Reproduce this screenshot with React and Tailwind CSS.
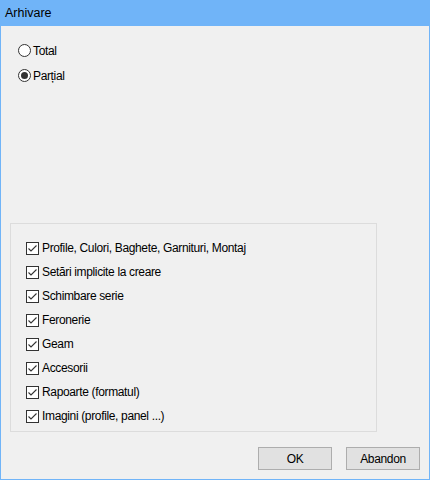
import { useState } from "react";

const ITEMS = [
  "Profile, Culori, Baghete, Garnituri, Montaj",
  "Setări implicite la creare",
  "Schimbare serie",
  "Feronerie",
  "Geam",
  "Accesorii",
  "Rapoarte (formatul)",
  "Imagini (profile, panel ...)",
];

function Radio({ label, checked, onClick }) {
  return (
    <div className="flex items-center h-[25px] cursor-default" onClick={onClick}>
      <span className="w-[13px] h-[13px] rounded-full border border-[#333] bg-white flex items-center justify-center">
        {checked && <span className="w-[7px] h-[7px] rounded-full bg-[#333]" />}
      </span>
      <span className="ml-[2px] leading-none">{label}</span>
    </div>
  );
}

function Check({ label, checked, onClick }) {
  return (
    <div className="flex items-center h-[24px] cursor-default" onClick={onClick}>
      <span className="w-[13px] h-[13px] border border-[#333] bg-white flex items-center justify-center">
        {checked && (
          <svg width="11" height="11" viewBox="0 0 11 11" fill="none">
            <path d="M1.5 5.5 L4 8 L9.5 2.5" stroke="#333" strokeWidth="1.1" />
          </svg>
        )}
      </span>
      <span className="ml-[3px] leading-none">{label}</span>
    </div>
  );
}

export default function App() {
  const [mode, setMode] = useState("partial");
  const [checks, setChecks] = useState(ITEMS.map(() => true));

  return (
    <div className="w-[430px] h-[480px] flex flex-col bg-[#f0f0f0] text-[12px] tracking-[-0.35px] text-black font-['Liberation_Sans',Arial,sans-serif]">
      {/* Title bar */}
      <div className="h-[26px] bg-[#70b4f8] flex items-center pl-[5px] text-[12.5px] tracking-normal shrink-0">
        Arhivare
      </div>

      {/* Body */}
      <div className="flex-1 flex flex-col border-x border-b border-[#70b4f8]">
        <div className="pl-[17px] pt-[12px]">
          <Radio label="Total" checked={mode === "total"} onClick={() => setMode("total")} />
          <Radio label="Parțial" checked={mode === "partial"} onClick={() => setMode("partial")} />
        </div>

        <div className="ml-[9px] mt-[135px] w-[367px] h-[209px] border border-[#dcdcdc] pl-[15px] pt-[12px]">
          {ITEMS.map((it, i) => (
            <Check
              key={it}
              label={it}
              checked={checks[i]}
              onClick={() => setChecks(c => c.map((v, j) => (j === i ? !v : v)))}
            />
          ))}
        </div>

        <div className="flex justify-end gap-[14px] pr-[9px] mt-[15px]">
          <button className="w-[74px] h-[23px] bg-[#e1e1e1] border border-[#adadad] text-[12px]">OK</button>
          <button className="w-[74px] h-[23px] bg-[#e1e1e1] border border-[#adadad] text-[12px]">Abandon</button>
        </div>
      </div>
    </div>
  );
}
